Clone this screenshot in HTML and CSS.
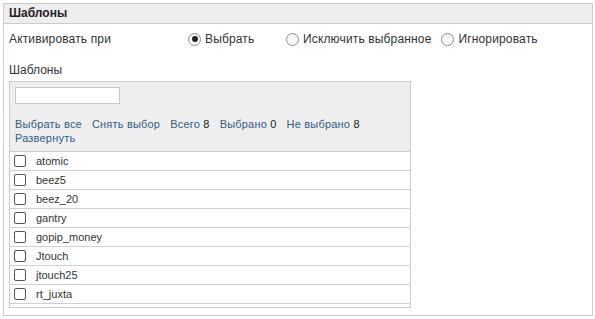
FILE: index.html
```html
<!DOCTYPE html>
<html lang="ru">
<head>
    <meta charset="UTF-8">
    <meta name="viewport" content="width=device-width, initial-scale=1.0">
    <title>Шаблоны</title>
    <link rel="stylesheet" href="styles.css">
</head>
<body>
    <div class="panel">
        <div class="panel-header">Шаблоны</div>
        <div class="panel-body">
            <div class="activate-row">
                <div class="activate-label">Активировать при</div>
                <label class="radio-option">
                    <span class="radio checked"></span>
                    Выбрать
                </label>
                <label class="radio-option">
                    <span class="radio"></span>
                    Исключить выбранное
                </label>
                <label class="radio-option">
                    <span class="radio"></span>
                    Игнорировать
                </label>
            </div>

            <div class="field-title">Шаблоны</div>

            <div class="picker">
                <div class="picker-toolbar">
                    <input type="text" class="picker-search">
                    <div class="picker-links">
                        <a href="#">Выбрать все</a>
                        <a href="#">Снять выбор</a>
                        <span><a href="#">Всего</a> 8</span>
                        <span><a href="#">Выбрано</a> 0</span>
                        <span><a href="#">Не выбрано</a> 8</span>
                        <a href="#">Развернуть</a>
                    </div>
                </div>
                <ul class="picker-list">
                    <li><span class="checkbox"></span>atomic</li>
                    <li><span class="checkbox"></span>beez5</li>
                    <li><span class="checkbox"></span>beez_20</li>
                    <li><span class="checkbox"></span>gantry</li>
                    <li><span class="checkbox"></span>gopip_money</li>
                    <li><span class="checkbox"></span>Jtouch</li>
                    <li><span class="checkbox"></span>jtouch25</li>
                    <li><span class="checkbox"></span>rt_juxta</li>
                </ul>
            </div>
        </div>
    </div>
</body>
</html>
```

FILE: styles.css
```css
* {
    margin: 0;
    padding: 0;
    box-sizing: border-box;
}

body {
    font-family: "Liberation Sans", Arial, sans-serif;
    font-size: 12px;
    color: #333;
    background: #fff;
    padding: 3px;
}

.panel {
    width: 590px;
    border: 1px solid #cccccc;
}

.panel-header {
    height: 20px;
    line-height: 19px;
    padding-left: 5px;
    background-color: #eeeeee;
    border-bottom: 1px solid #cccccc;
    font-weight: bold;
    color: #222;
}

.panel-body {
    padding: 5px 5px 7px 5px;
}

/* Activation radios */
.activate-row {
    display: flex;
    align-items: center;
    height: 20px;
    letter-spacing: 0.15px;
}

.activate-label {
    width: 179px;
}

.radio-option {
    display: flex;
    align-items: center;
    gap: 4px;
    min-width: 88px;
    margin-right: 10px;
    color: #333;
}

.radio {
    width: 13px;
    height: 13px;
    border: 1px solid #8c8c8c;
    border-radius: 50%;
    background: linear-gradient(#f2f2f2, #ffffff);
    display: flex;
    justify-content: center;
    align-items: center;
}

.radio.checked::after {
    content: "";
    width: 6px;
    height: 6px;
    border-radius: 50%;
    background-color: #222;
}

.field-title {
    margin-top: 14px;
    margin-bottom: 4px;
    line-height: 14px;
}

/* Template picker */
.picker {
    width: 402px;
    border: 1px solid #cccccc;
    padding-bottom: 3px;
    font-size: 11px;
}

.picker-toolbar {
    background-color: #eeeeee;
    border-bottom: 1px solid #cccccc;
    padding: 5px 5px 6px 5px;
}

.picker-search {
    display: block;
    width: 105px;
    height: 17px;
    border: 1px solid #c8c8c8;
    background: #fff;
    margin-bottom: 13px;
}

.picker-links {
    display: flex;
    flex-wrap: wrap;
    column-gap: 10px;
    line-height: 14px;
    letter-spacing: 0.2px;
    color: #222;
}

.picker-links a {
    color: #2e5d86;
    text-decoration: none;
}

.picker-list {
    list-style: none;
}

.picker-list li {
    display: flex;
    align-items: center;
    height: 19px;
    padding-left: 4px;
    border-bottom: 1px solid #d0d0d0;
    color: #333;
}

.checkbox {
    width: 12px;
    height: 12px;
    border: 1px solid #555;
    border-radius: 2px;
    background: #fff;
    margin-right: 10px;
}
```
